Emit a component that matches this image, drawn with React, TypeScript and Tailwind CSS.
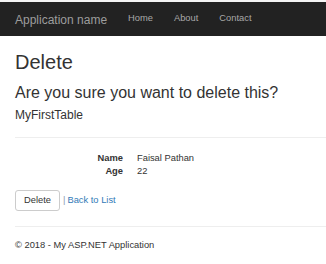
import React from "react";

export default function App() {
  return (
    <div className="w-[326px] h-[264px] overflow-hidden bg-white text-[#333] font-['Liberation_Sans',Arial,sans-serif]">
      <div className="h-[2px] bg-[#f4f4f4]" />
      <nav className="h-[34px] bg-[#222] flex items-center pl-[15px] gap-[21px]">
        <span className="text-[12px] text-[#9d9d9d] leading-none mt-[1px]">Application name</span>
        <span className="text-[9.33px] text-[#a8a8a8] leading-none">Home</span>
        <span className="text-[9.33px] text-[#a8a8a8] leading-none">About</span>
        <span className="text-[9.33px] text-[#a8a8a8] leading-none">Contact</span>
      </nav>
      <main className="pl-[15px]">
        <h2 className="mt-[14.5px] text-[20px] leading-[22px]">Delete</h2>
        <h3 className="mt-[11.5px] text-[16px] leading-[17.6px]">Are you sure you want to delete this?</h3>
        <h4 className="mt-[7.4px] text-[12px] leading-[13.2px]">MyFirstTable</h4>
        <div className="mt-[14.8px] h-px bg-[#eee]" />
        <dl className="mt-[14.3px] text-[9.33px] leading-[12.6px]">
          <div className="flex">
            <dt className="w-[108px] text-right font-bold">Name</dt>
            <dd className="ml-[14px]">Faisal Pathan</dd>
          </div>
          <div className="flex">
            <dt className="w-[108px] text-right font-bold">Age</dt>
            <dd className="ml-[14px]">22</dd>
          </div>
        </dl>
        <div className="mt-[12.9px] flex items-center text-[9.33px]">
          <button className="w-[45px] h-[21px] border border-[#ccc] rounded-[3px] bg-white text-[#333] flex items-center justify-center">
            Delete
          </button>
          <span className="ml-[3px] text-[#8a9bb0]">|</span>
          <span className="ml-[2px] text-[#337ab7]">Back to List</span>
        </div>
        <div className="mt-[15px] h-px bg-[#eee]" />
        <p className="mt-[11.8px] text-[9.33px] leading-[13.3px]">© 2018 - My ASP.NET Application</p>
      </main>
    </div>
  );
}
